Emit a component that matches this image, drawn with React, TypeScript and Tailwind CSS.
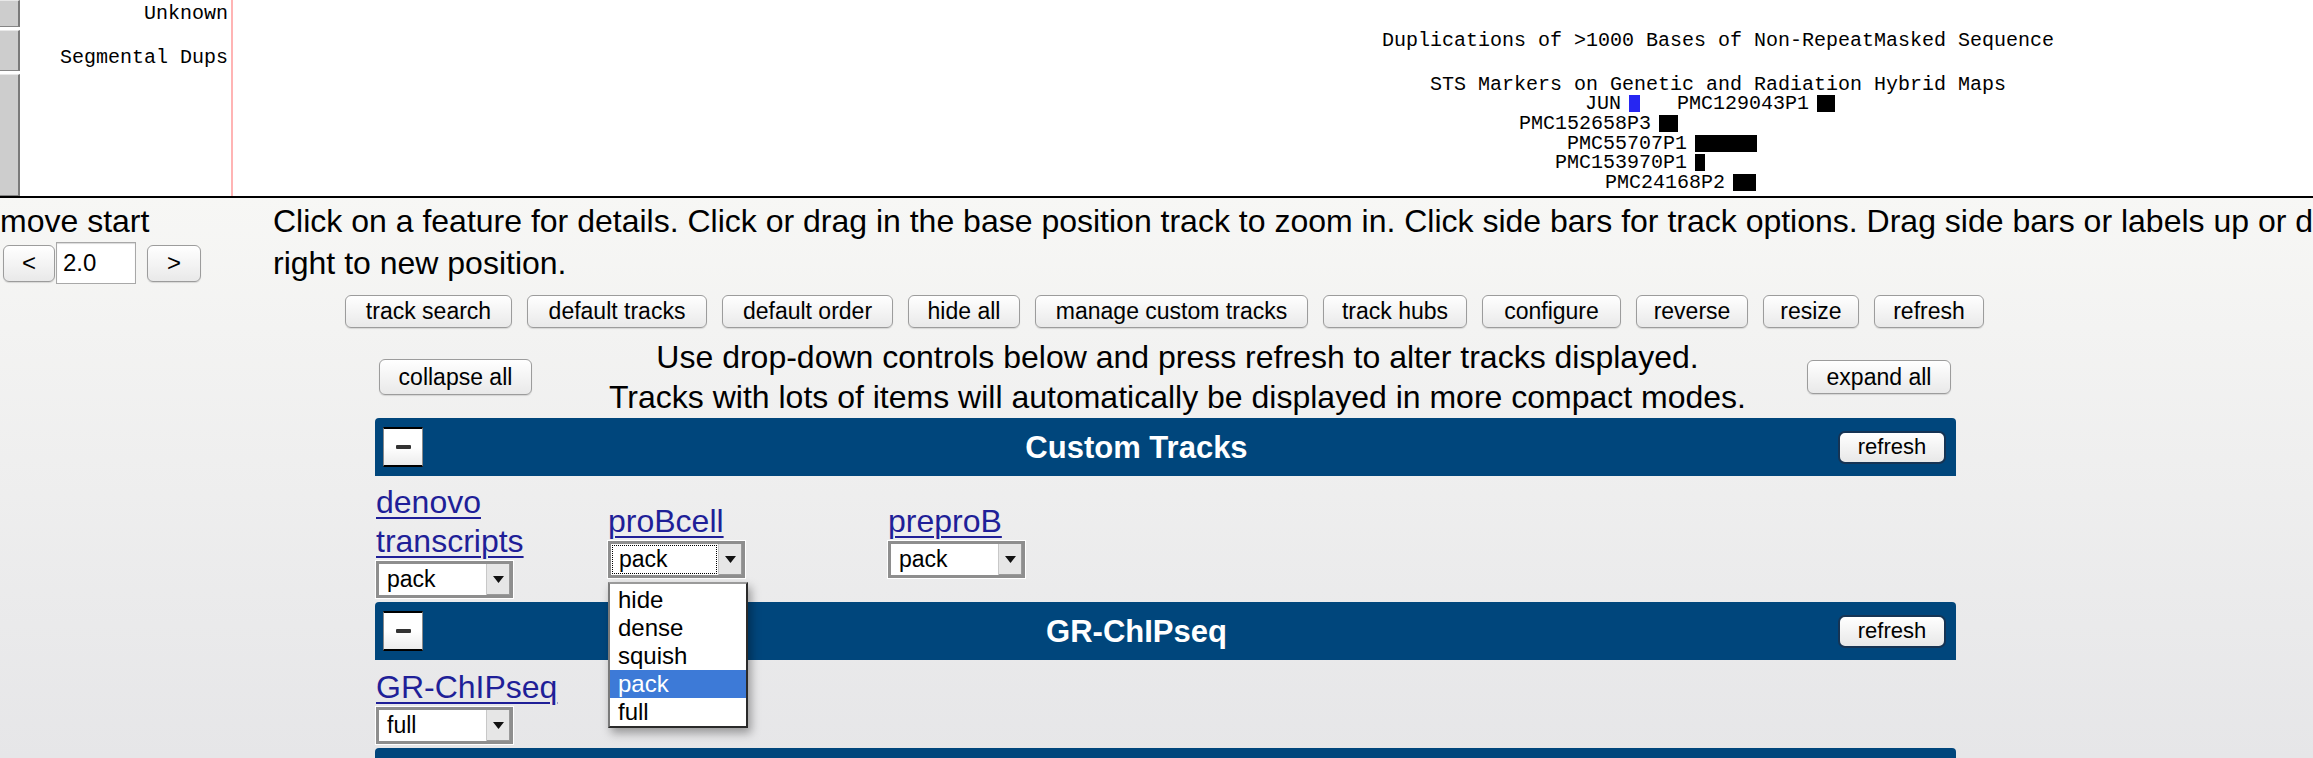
import React from "react";

const SANS = "font-['Liberation_Sans',Arial,Helvetica,sans-serif]";
const MONO = "font-['Liberation_Mono','DejaVu_Sans_Mono',monospace]";

function Btn({ label, cls }: { label: string; cls: string }) {
  return (
    <div
      className={`flex shrink-0 items-center justify-center rounded-[6px] border border-[#9c9c9c] bg-linear-to-b from-white to-[#e9e9e9] text-[23px] leading-none text-black shadow-[0_1px_1px_rgba(0,0,0,0.12)] ${cls}`}
    >
      {label}
    </div>
  );
}

function Arrow() {
  return (
    <svg width="11" height="7" viewBox="0 0 11 7">
      <path d="M0 0 H11 L5.5 7 Z" fill="#111" />
    </svg>
  );
}

function Select({ value, focus }: { value: string; focus?: boolean }) {
  return (
    <div className="flex h-[37px] w-[137px] border-[3px] border-[#8e8e8e] bg-white shadow-[0_0_0_1px_#ffffff]">
      <div className="flex flex-1 items-stretch p-[1px]">
        <div
          className={`flex flex-1 items-center pl-[6px] text-[23px] leading-none text-black ${
            focus ? "border border-dotted border-black" : "border border-transparent"
          }`}
        >
          {value}
        </div>
      </div>
      <div className="flex w-[24px] items-center justify-center border-l border-[#c8c8c8] bg-[#e6e6e6] shadow-[inset_-1px_-1px_0_#9a9a9a]">
        <Arrow />
      </div>
    </div>
  );
}

function MinusBtn() {
  return (
    <div className="ml-[8px] flex h-[40px] w-[40px] shrink-0 items-center justify-center border-x border-y-[2px] border-x-[#8a8a8a] border-y-black bg-linear-to-b from-white via-white to-[#ececec]">
      <div className="h-[4px] w-[15px] rounded-[1px] bg-[#333]" />
    </div>
  );
}

function BarRefresh() {
  return (
    <div className="mr-[10px] flex h-[33px] w-[108px] shrink-0 items-center justify-center rounded-[7px] border-[2px] border-[#163454] bg-linear-to-b from-white to-[#e8e8e8] text-[22px] leading-none text-black">
      refresh
    </div>
  );
}

function Bar({ title }: { title: string }) {
  return (
    <div className="flex h-[58px] items-center rounded-t-[4px] bg-[#00467c]">
      <MinusBtn />
      <div className="flex-1 pl-[12px] text-center text-[31px] font-bold leading-none text-white">
        {title}
      </div>
      <BarRefresh />
    </div>
  );
}

const LINK =
  "text-[32px] leading-[39px] text-[#1f1f98] underline decoration-[2px] underline-offset-[4px]";

function SideBar({ cls }: { cls: string }) {
  return (
    <div
      className={`border-t border-r-[2px] border-b border-t-[#e8e8e8] border-r-[#7a7a7a] border-b-[#858585] bg-[#cdcdcd] ${cls}`}
    />
  );
}

function Marker({
  label,
  cls,
  box,
  blue,
}: {
  label: string;
  cls: string;
  box: string;
  blue?: boolean;
}) {
  return (
    <div className={`absolute flex h-[17px] items-center gap-[8px] ${cls}`}>
      <span className={`${MONO} text-[20px] leading-[17px] text-black`}>{label}</span>
      <div className={`h-[17px] ${box} ${blue ? "bg-[#2626f2]" : "bg-black"}`} />
    </div>
  );
}

export default function App() {
  return (
    <div className="relative h-[758px] w-[2313px] overflow-hidden bg-[#f5f5f3]">
      {/* Track image */}
      <div className="relative flex h-[198px] border-b-[2px] border-black bg-white">
        <div className="flex w-[20px] flex-col gap-[3px]">
          <SideBar cls="h-[27px]" />
          <SideBar cls="h-[41px]" />
          <SideBar cls="flex-1" />
        </div>
        <div className={`${MONO} w-[211px] pr-[3px] pt-[4px] text-right text-[20px] leading-[20px] text-black`}>
          <div>Unknown</div>
          <div className="mt-[24px]">Segmental Dups</div>
        </div>
        <div className="w-[2px] bg-[#ffb4b4]" />
        <div className="flex-1" />

        <div className={`${MONO} absolute left-[1382px] top-[31px] text-[20px] leading-[20px] text-black whitespace-nowrap`}>
          Duplications of &gt;1000 Bases of Non-RepeatMasked Sequence
        </div>
        <div className={`${MONO} absolute left-[1430px] top-[75px] text-[20px] leading-[20px] text-black whitespace-nowrap`}>
          STS Markers on Genetic and Radiation Hybrid Maps
        </div>
        <Marker label="JUN" cls="left-[1585px] top-[95px]" box="w-[11px]" blue />
        <Marker label="PMC129043P1" cls="left-[1677px] top-[95px]" box="w-[18px]" />
        <Marker label="PMC152658P3" cls="left-[1519px] top-[115px]" box="w-[19px]" />
        <Marker label="PMC55707P1" cls="left-[1567px] top-[135px]" box="w-[62px]" />
        <Marker label="PMC153970P1" cls="left-[1555px] top-[154px]" box="w-[10px]" />
        <Marker label="PMC24168P2" cls="left-[1605px] top-[174px]" box="w-[23px]" />
      </div>

      {/* Controls area */}
      <div className={`${SANS} h-[560px] bg-linear-to-b from-[#f7f7f5] to-[#e6e6e8] text-black`}>
        <div className="flex pt-[2px]">
          <div className="w-[273px] shrink-0">
            <div className="text-[32px] leading-[42px]">move start</div>
            <div className="flex items-center">
              <Btn label="<" cls="ml-[3px] w-[52px] h-[37px] text-[24px]" />
              <div className="ml-[1px] flex h-[42px] w-[80px] items-center border border-[#a8a8a8] bg-white pl-[6px] text-[24px] shadow-[inset_0_1px_1px_rgba(0,0,0,0.15)]">
                2.0
              </div>
              <Btn label=">" cls="ml-[11px] w-[54px] h-[37px] text-[24px]" />
            </div>
          </div>
          <div className="whitespace-nowrap text-[32px] leading-[42px]">
            Click on a feature for details. Click or drag in the base position track to zoom in. Click side
            bars for track options. Drag side bars or labels up or down to reorder tracks. Drag tracks left or
            <br />
            right to new position.
          </div>
        </div>

        <div className="mt-[11px] flex gap-[15px] pl-[345px]">
          <Btn label="track search" cls="w-[167px] h-[33px]" />
          <Btn label="default tracks" cls="w-[180px] h-[33px]" />
          <Btn label="default order" cls="w-[171px] h-[33px]" />
          <Btn label="hide all" cls="w-[112px] h-[33px]" />
          <Btn label="manage custom tracks" cls="w-[273px] h-[33px]" />
          <Btn label="track hubs" cls="w-[144px] h-[33px]" />
          <Btn label="configure" cls="w-[139px] h-[33px]" />
          <Btn label="reverse" cls="w-[112px] h-[33px]" />
          <Btn label="resize" cls="w-[96px] h-[33px]" />
          <Btn label="refresh" cls="w-[110px] h-[33px]" />
        </div>

        <div className="ml-[375px] w-[1581px]">
          <div className="mt-[9px] flex items-center">
            <Btn label="collapse all" cls="ml-[4px] w-[153px] h-[36px]" />
            <div className="flex-1 pl-[16px] text-center text-[32px] leading-[40px]">
              Use drop-down controls below and press refresh to alter tracks displayed.
              <br />
              Tracks with lots of items will automatically be displayed in more compact modes.
            </div>
            <Btn label="expand all" cls="mr-[5px] w-[144px] h-[34px]" />
          </div>

          <div className="mt-[1px]">
            <Bar title="Custom Tracks" />
          </div>
          <div className="flex h-[122px] items-center pt-[6px]">
            <div className="flex w-[233px] flex-col items-start pl-[1px]">
              <span className={LINK}>
                denovo
                <br />
                transcripts
              </span>
              <Select value="pack" />
            </div>
            <div className="flex w-[280px] flex-col items-start">
              <span className={LINK}>proBcell</span>
              <div className="relative">
                <Select value="pack" focus />
                <div className="absolute left-0 top-full z-10 mt-[4px] w-[140px] border-[2px] border-[#2a2a2a] border-t-[#9a9a9a] border-l-[#7a7a7a] bg-white pt-[2px] shadow-[3px_5px_9px_rgba(0,0,0,0.35)]">
                  {["hide", "dense", "squish", "pack", "full"].map((o) => (
                    <div
                      key={o}
                      className={`h-[28px] pl-[8px] text-[24px] leading-[28px] ${
                        o === "pack" ? "bg-[#3d7ad7] text-white" : "text-black"
                      }`}
                    >
                      {o}
                    </div>
                  ))}
                </div>
              </div>
            </div>
            <div className="flex flex-col items-start">
              <span className={LINK}>preproB</span>
              <Select value="pack" />
            </div>
          </div>

          <div className="mt-[4px]">
            <Bar title="GR-ChIPseq" />
          </div>
          <div className="flex h-[88px] items-center pt-[4px]">
            <div className="flex flex-col items-start pl-[1px]">
              <span className={LINK}>GR-ChIPseq</span>
              <Select value="full" />
            </div>
          </div>
          <div className="h-[58px] rounded-t-[4px] bg-[#00467c]" />
        </div>
      </div>
    </div>
  );
}
